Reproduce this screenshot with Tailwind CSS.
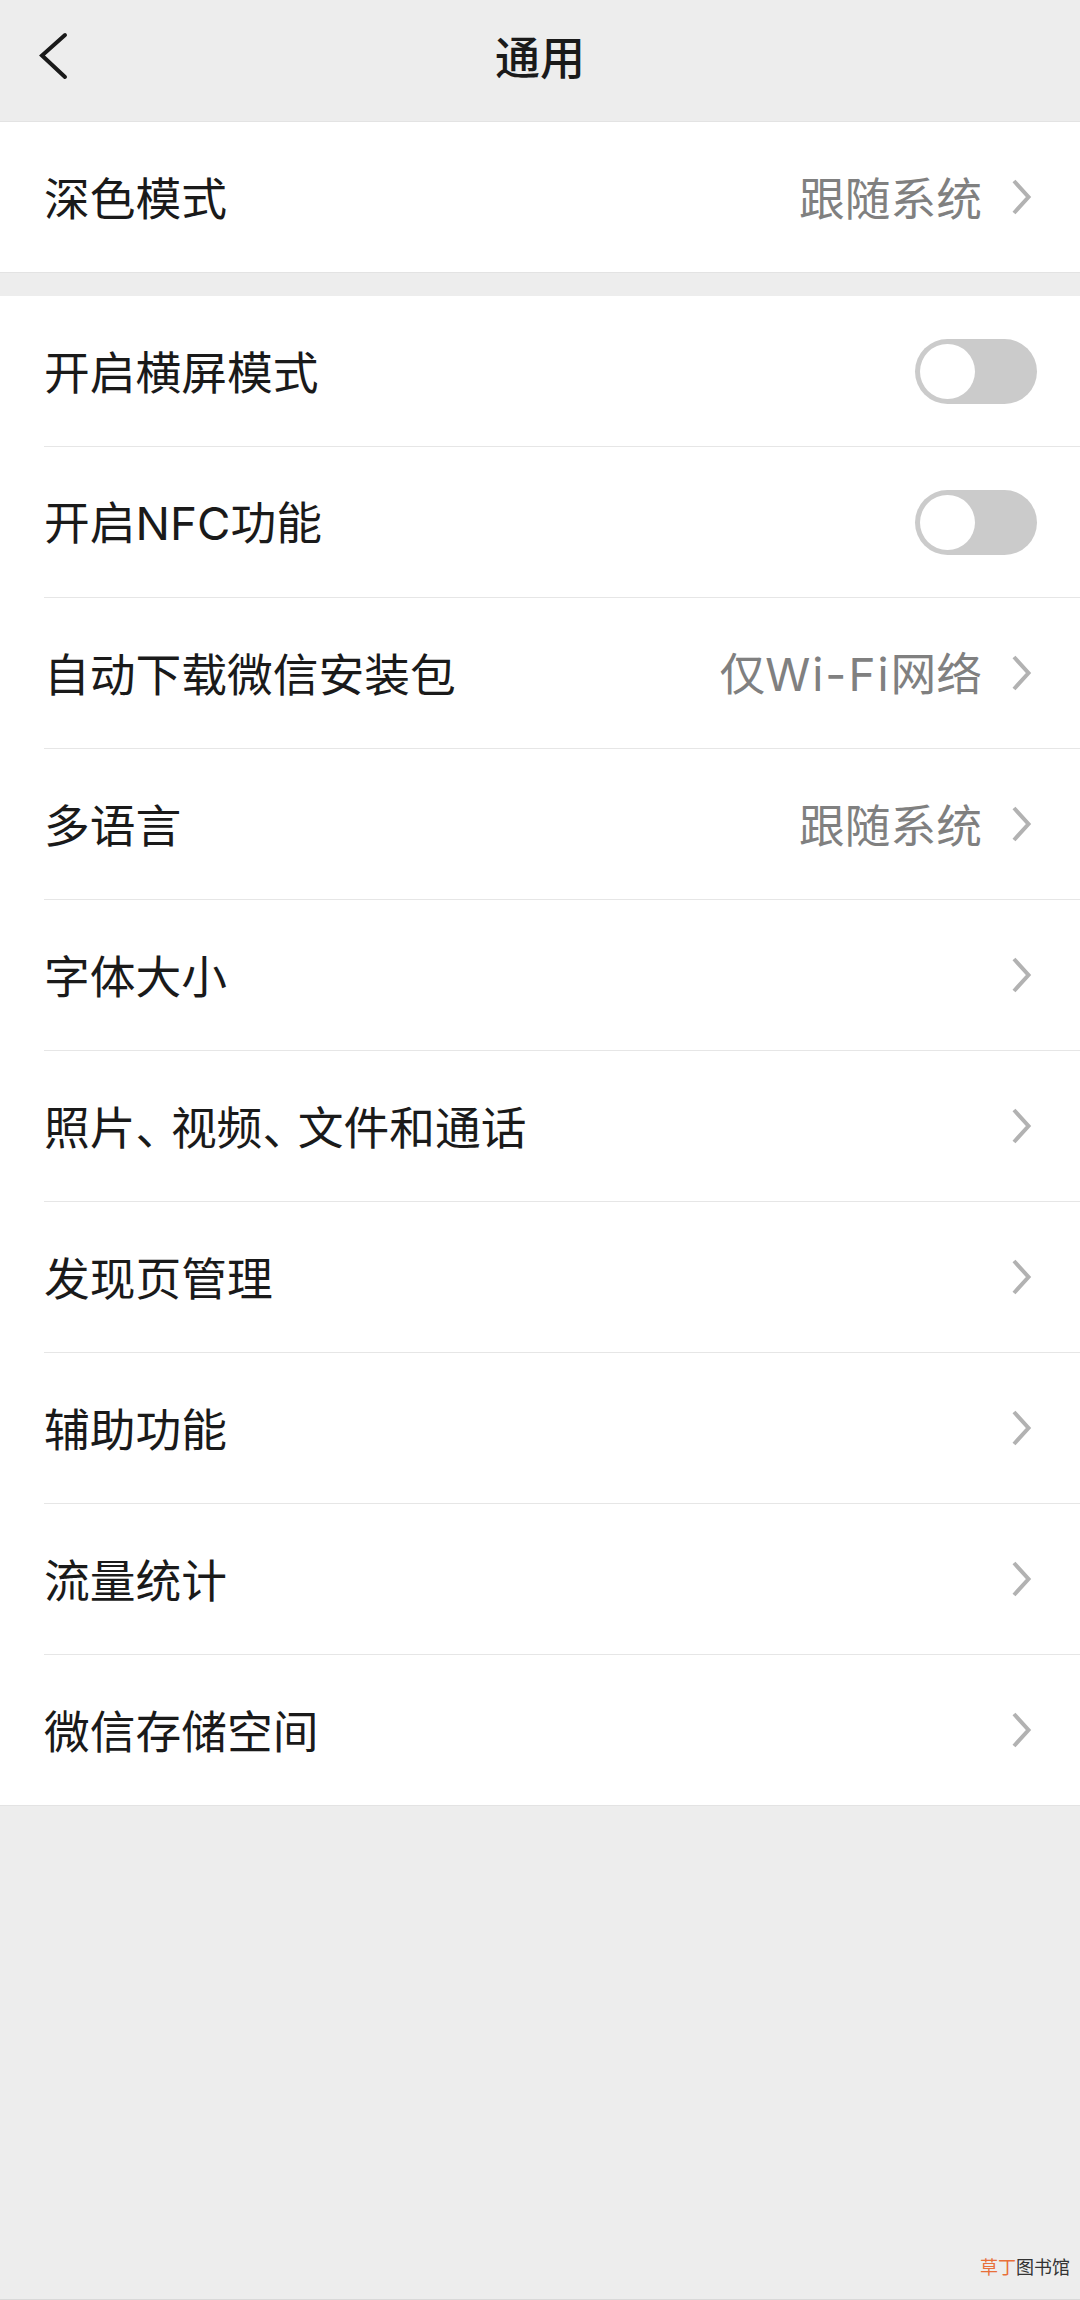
<!DOCTYPE html>
<html lang="zh-CN">
  <head>
    <meta charset="UTF-8" />
    <title>通用</title>
    <script src="https://cdn.jsdelivr.net/npm/@tailwindcss/browser@4"></script>
  </head>
  <body class="m-0 bg-[#ededed] font-['Noto_Sans_CJK_SC',sans-serif] text-[#1a1a1a]">
    <div class="relative h-[2300px] w-[1080px] overflow-hidden border-b border-[#d9d9d9]">
      <!-- 顶部导航 -->
      <header class="relative flex h-[122px] items-center justify-center border-b border-[#e3e3e3] pb-[11px]">
        <svg class="absolute left-[30px] top-[28px]" width="44" height="56" viewBox="0 0 44 56" fill="none">
          <path d="M35 7 L12 27.5 L35 49" stroke="#1a1a1a" stroke-width="4" stroke-linecap="round" />
        </svg>
        <h1 class="text-[45px] font-medium leading-none">通用</h1>
      </header>

      <!-- 深色模式 -->
      <section class="border-b border-[#e3e3e3] bg-white">
        <div class="flex h-[150px] items-center pl-[44px] pr-[46px]">
          <span class="flex-1 text-[45.75px] leading-none">深色模式</span>
          <span class="text-[45.75px] leading-none text-[#808080]">跟随系统</span>
          <svg class="ml-[30px]" width="22" height="36" viewBox="0 0 22 36" fill="none"><path d="M2 2 L16.5 18 L2 34" stroke="#b2b2b2" stroke-width="4" /></svg>
        </div>
      </section>

      <!-- 设置列表 -->
      <section class="mt-[23px] border-b border-[#e3e3e3] bg-white">
        <div class="ml-[44px] flex h-[151px] items-center border-b border-[#e6e6e6] pr-[43px]">
          <span class="flex-1 text-[45.75px] leading-none">开启横屏模式</span>
          <div class="flex h-[65px] w-[122px] items-center rounded-full bg-[#cbcbcb] pl-[5px]"><div class="h-[55px] w-[55px] rounded-full bg-white"></div></div>
        </div>
        <div class="ml-[44px] flex h-[151px] items-center border-b border-[#e6e6e6] pr-[43px]">
          <span class="flex-1 text-[45.75px] leading-none">开启<span class="font-['Inter']">NFC</span>功能</span>
          <div class="flex h-[65px] w-[122px] items-center rounded-full bg-[#cbcbcb] pl-[5px]"><div class="h-[55px] w-[55px] rounded-full bg-white"></div></div>
        </div>
        <div class="ml-[44px] flex h-[151px] items-center border-b border-[#e6e6e6] pr-[46px]">
          <span class="flex-1 text-[45.75px] leading-none">自动下载微信安装包</span>
          <span class="text-[45.75px] leading-none text-[#808080]">仅<span class="font-['Inter'] tracking-[2px]">Wi-Fi</span>网络</span>
          <svg class="ml-[30px]" width="22" height="36" viewBox="0 0 22 36" fill="none"><path d="M2 2 L16.5 18 L2 34" stroke="#b2b2b2" stroke-width="4" /></svg>
        </div>
        <div class="ml-[44px] flex h-[151px] items-center border-b border-[#e6e6e6] pr-[46px]">
          <span class="flex-1 text-[45.75px] leading-none">多语言</span>
          <span class="text-[45.75px] leading-none text-[#808080]">跟随系统</span>
          <svg class="ml-[30px]" width="22" height="36" viewBox="0 0 22 36" fill="none"><path d="M2 2 L16.5 18 L2 34" stroke="#b2b2b2" stroke-width="4" /></svg>
        </div>
        <div class="ml-[44px] flex h-[151px] items-center border-b border-[#e6e6e6] pr-[46px]">
          <span class="flex-1 text-[45.75px] leading-none">字体大小</span>
          <svg width="22" height="36" viewBox="0 0 22 36" fill="none"><path d="M2 2 L16.5 18 L2 34" stroke="#b2b2b2" stroke-width="4" /></svg>
        </div>
        <div class="ml-[44px] flex h-[151px] items-center border-b border-[#e6e6e6] pr-[46px]">
          <span class="flex-1 text-[45.75px] leading-none">照片<span class="mr-[12.5px] [font-feature-settings:'halt']">、</span>视频<span class="mr-[12.5px] [font-feature-settings:'halt']">、</span>文件和通话</span>
          <svg width="22" height="36" viewBox="0 0 22 36" fill="none"><path d="M2 2 L16.5 18 L2 34" stroke="#b2b2b2" stroke-width="4" /></svg>
        </div>
        <div class="ml-[44px] flex h-[151px] items-center border-b border-[#e6e6e6] pr-[46px]">
          <span class="flex-1 text-[45.75px] leading-none">发现页管理</span>
          <svg width="22" height="36" viewBox="0 0 22 36" fill="none"><path d="M2 2 L16.5 18 L2 34" stroke="#b2b2b2" stroke-width="4" /></svg>
        </div>
        <div class="ml-[44px] flex h-[151px] items-center border-b border-[#e6e6e6] pr-[46px]">
          <span class="flex-1 text-[45.75px] leading-none">辅助功能</span>
          <svg width="22" height="36" viewBox="0 0 22 36" fill="none"><path d="M2 2 L16.5 18 L2 34" stroke="#b2b2b2" stroke-width="4" /></svg>
        </div>
        <div class="ml-[44px] flex h-[151px] items-center border-b border-[#e6e6e6] pr-[46px]">
          <span class="flex-1 text-[45.75px] leading-none">流量统计</span>
          <svg width="22" height="36" viewBox="0 0 22 36" fill="none"><path d="M2 2 L16.5 18 L2 34" stroke="#b2b2b2" stroke-width="4" /></svg>
        </div>
        <div class="ml-[44px] flex h-[150px] items-center pr-[46px]">
          <span class="flex-1 text-[45.75px] leading-none">微信存储空间</span>
          <svg width="22" height="36" viewBox="0 0 22 36" fill="none"><path d="M2 2 L16.5 18 L2 34" stroke="#b2b2b2" stroke-width="4" /></svg>
        </div>
      </section>

      <!-- 水印 -->
      <div class="absolute bottom-[24px] right-[10px] text-[18px] leading-none text-[#333]"><span class="text-[#e8703a]">草丁</span>图书馆</div>
    </div>
  </body>
</html>
